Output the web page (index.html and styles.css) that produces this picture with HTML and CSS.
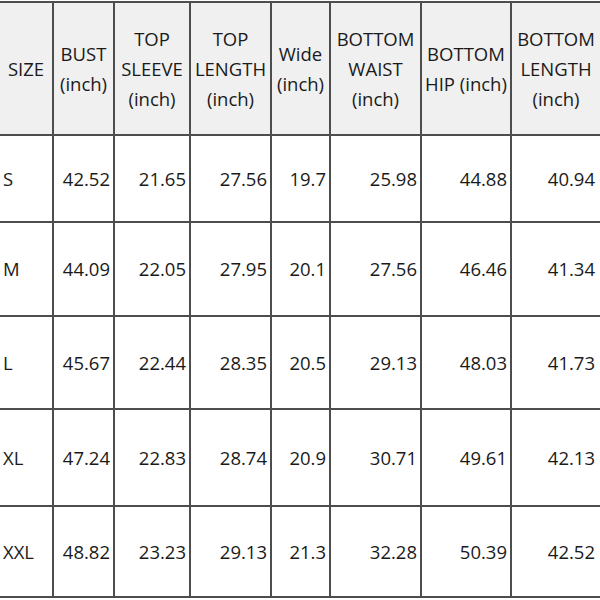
FILE: index.html
```html
<!DOCTYPE html>
<html lang="en">
<head>
<meta charset="utf-8">
<title>Size Chart</title>
<link rel="stylesheet" href="styles.css">
</head>
<body>
<div class="chart">
  <div class="cell head">SIZE</div>
  <div class="cell head">BUST<br>(inch)</div>
  <div class="cell head">TOP<br>SLEEVE<br>(inch)</div>
  <div class="cell head">TOP<br>LENGTH<br>(inch)</div>
  <div class="cell head">Wide<br>(inch)</div>
  <div class="cell head">BOTTOM<br>WAIST<br>(inch)</div>
  <div class="cell head">BOTTOM<br>HIP (inch)</div>
  <div class="cell head last">BOTTOM<br>LENGTH<br>(inch)</div>

  <div class="cell size">S</div>
  <div class="cell num">42.52</div>
  <div class="cell num">21.65</div>
  <div class="cell num">27.56</div>
  <div class="cell num">19.7</div>
  <div class="cell num">25.98</div>
  <div class="cell num">44.88</div>
  <div class="cell num last">40.94</div>

  <div class="cell size">M</div>
  <div class="cell num">44.09</div>
  <div class="cell num">22.05</div>
  <div class="cell num">27.95</div>
  <div class="cell num">20.1</div>
  <div class="cell num">27.56</div>
  <div class="cell num">46.46</div>
  <div class="cell num last">41.34</div>

  <div class="cell size">L</div>
  <div class="cell num">45.67</div>
  <div class="cell num">22.44</div>
  <div class="cell num">28.35</div>
  <div class="cell num">20.5</div>
  <div class="cell num">29.13</div>
  <div class="cell num">48.03</div>
  <div class="cell num last">41.73</div>

  <div class="cell size">XL</div>
  <div class="cell num">47.24</div>
  <div class="cell num">22.83</div>
  <div class="cell num">28.74</div>
  <div class="cell num">20.9</div>
  <div class="cell num">30.71</div>
  <div class="cell num">49.61</div>
  <div class="cell num last">42.13</div>

  <div class="cell size">XXL</div>
  <div class="cell num">48.82</div>
  <div class="cell num">23.23</div>
  <div class="cell num">29.13</div>
  <div class="cell num">21.3</div>
  <div class="cell num">32.28</div>
  <div class="cell num">50.39</div>
  <div class="cell num last">42.52</div>
</div>
</body>
</html>
```

FILE: styles.css
```css
html, body {
  margin: 0;
  padding: 0;
  background: #ffffff;
}

body {
  font-family: "Open Sans", "Noto Sans", sans-serif;
  font-size: 18.5px;
  color: #1a1a1a;
}

.chart {
  margin-top: 1px;
  width: 600px;
  display: grid;
  grid-template-columns: 54px 61px 76px 81px 59px 91px 90px 88px;
  grid-template-rows: 133px 87px 94px 93px 97px 91px;
  border-top: 2px solid #4d4d4d;
}

.cell {
  box-sizing: border-box;
  border-right: 2px solid #4d4d4d;
  border-bottom: 2px solid #4d4d4d;
  display: flex;
  align-items: center;
  white-space: nowrap;
  line-height: 30px;
}

.cell.last {
  border-right: none;
}

.head {
  background: #f0f0f0;
  justify-content: center;
  text-align: center;
  padding-top: 1px;
}

.size {
  justify-content: flex-start;
  padding-left: 3px;
}

.num {
  justify-content: flex-end;
  padding-right: 3px;
}

.num.last {
  padding-right: 5px;
}
```
